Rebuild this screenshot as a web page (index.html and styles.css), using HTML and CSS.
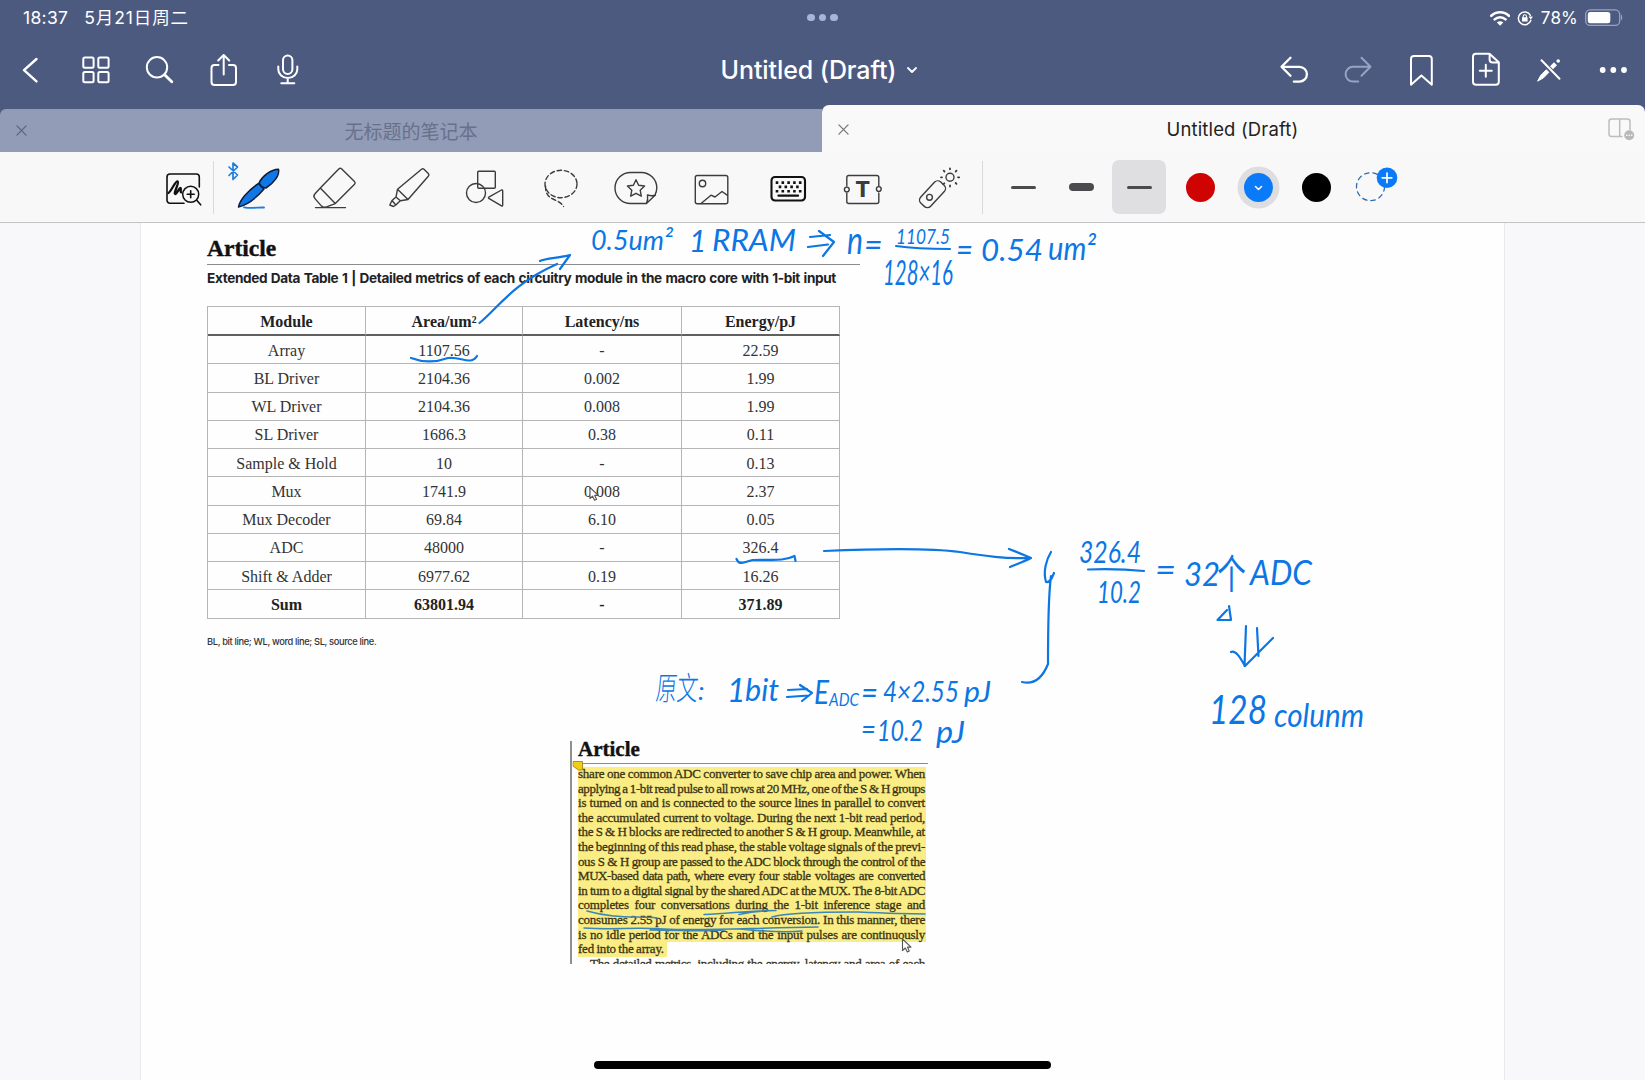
FILE: index.html
```html
<!DOCTYPE html>
<html lang="zh-CN">
<head>
<meta charset="utf-8">
<title>Untitled (Draft)</title>
<link rel="stylesheet" href="styles.css">
</head>
<body>
<div class="app">
  <header class="header">
    <div class="status">
      <div class="status-left"><span>18:37</span><span class="date">5月21日周二</span></div>
      <div class="multitask"><i></i><i></i><i></i></div>
      <div class="status-right">
        <svg width="20" height="16" viewBox="1490 9 20 16" fill="none" stroke="#fff" stroke-width="2.6"><path d="M1491.3 14.8a12.6 12.6 0 0 1 17.6 0M1494.7 18.4a7.8 7.8 0 0 1 10.8 0"/><path d="M1500.1 24.8l-3.2-3.3a4.6 4.6 0 0 1 6.4 0z" fill="#fff" stroke="none"/></svg>
        <svg class="lock" width="16" height="16" viewBox="1517 9 16 16" fill="none" stroke="#fff" stroke-width="1.5"><path d="M1530.8 19.5a6.4 6.4 0 1 1-.4-5.2"/><path d="M1528.6 15.5h4.2l-2 3.2z" fill="#fff" stroke="none"/><path d="M1522 16.3h5.6v4.2h-5.6z" fill="#fff" stroke="none"/><path d="M1523.2 16.5v-1.2a1.6 1.6 0 0 1 3.2 0v1.2" stroke-width="1.1"/></svg>
        <span class="percent">78%</span>
        <svg width="38" height="18" viewBox="1585 9 38 18" fill="none"><rect x="1585.7" y="9.8" width="34" height="15.6" rx="4.5" stroke="#9aa3bd" stroke-width="1.3"/><rect x="1587.8" y="12" width="22.5" height="11.2" rx="2.5" fill="#fff"/><path d="M1621 14.5c1.6.6 1.6 5.4 0 6z" fill="#9aa3bd"/></svg>
      </div>
    </div>
    <div class="nav">
      <div class="nav-group">
        <svg viewBox="0 38 64 64"><path d="M36.500 59L24 70.2 36.500 81.4" stroke-width="2.4"/></svg>
        <svg viewBox="64 38 64 64"><rect x="83.3" y="57.5" width="10.3" height="10.3" rx="1.5"/><rect x="98.3" y="57.5" width="10.3" height="10.3" rx="1.5"/><rect x="83.3" y="72" width="10.3" height="10.3" rx="1.5"/><rect x="98.3" y="72" width="10.3" height="10.3" rx="1.5"/></svg>
        <svg viewBox="128 38 64 64"><circle cx="157" cy="67.3" r="10.2"/><path d="M164.6 74.8l7.2 7" stroke-width="2.8"/></svg>
        <svg viewBox="192 38 64 64"><path d="M218.5 65h-4a3 3 0 0 0-3 3v14a3 3 0 0 0 3 3h18.5a3 3 0 0 0 3-3V68a3 3 0 0 0-3-3h-4M223.7 74.5V55.5M218.2 60.5l5.5-5.5 5.5 5.5"/></svg>
        <svg viewBox="256 38 64 64"><rect x="283" y="55.5" width="9.4" height="18.5" rx="4.7"/><path d="M278.3 66.5v3a9.5 8.5 0 0 0 19 0v-3M287.7 78v5M281.3 83.3h13"/></svg>
      </div>
      <div class="title"><span>Untitled (Draft)</span><svg width="12" height="10" viewBox="0 0 12 10"><path d="M2 3l4 4 4-4" stroke-width="1.8"/></svg></div>
      <div class="nav-group">
        <svg viewBox="1261 38 64 64"><path d="M1290.5 57.8l-9 9 9 9M1282.5 66.8h17a7.4 7.4 0 0 1 0 14.8h-5.7" stroke-width="2.3"/></svg>
        <svg class="dim" viewBox="1325 38 64 64"><path d="M1361.500 57.8l9 9-9 9M1369.500 66.8h-16.5a7.4 7.4 0 0 0 0 14.8h5.2"/></svg>
        <svg viewBox="1389 38 64 64"><path d="M1411 84.7V59a3 3 0 0 1 3-3h14.8a3 3 0 0 1 3 3v25.7l-10.4-9.2z"/></svg>
        <svg viewBox="1453 38 64 64"><path d="M1476 53.8h13.5l9.3 8.5v19.5a3 3 0 0 1-3 3H1476a3 3 0 0 1-3-3v-25a3 3 0 0 1 3-3zM1489.6 54v5.5a3 3 0 0 0 3 3h6"/><path d="M1485.8 64.8v12M1479.8 70.8h12"/></svg>
        <svg viewBox="1517 38 64 64"><path d="M1541.5 60.3l18 18.5"/><path d="M1537.8 80.8l3-5.500 5.500-5.500 2.600 2.500-5.400 5.500z" fill="#fff" stroke-width="1"/><path d="M1551.5 67.800l4-4" stroke-width="4.2" stroke-linecap="butt"/><circle cx="1558.2" cy="61" r="1.8" fill="#fff" stroke="none"/></svg>
        <svg viewBox="1581 38 64 64"><g fill="#fff" stroke="none"><circle cx="1602.7" cy="70" r="2.9"/><circle cx="1613.3" cy="70" r="2.9"/><circle cx="1624" cy="70" r="2.9"/></g></svg>
      </div>
    </div>
    <div class="tabs">
      <div class="tab inactive">
        <svg class="close" viewBox="0 0 12 12"><path d="M1 1l10 10M11 1L1 11"/></svg>
        <span>无标题的笔记本</span>
      </div>
      <div class="tab active">
        <svg class="close" viewBox="0 0 12 12"><path d="M1 1l10 10M11 1L1 11"/></svg>
        <span>Untitled (Draft)</span>
        <svg class="split" viewBox="1608 117 27 25"><path d="M1622 136.5h-10.5a2.5 2.5 0 0 1-2.5-2.5v-12.5a2.5 2.5 0 0 1 2.5-2.5h16a2.5 2.5 0 0 1 2.5 2.5v8M1619.7 119v17.500"/><circle cx="1629.2" cy="135.300" r="5" fill="#b9b9b9" stroke="none"/><path d="M1626.700 135.300h.1M1629.200 135.300h.1M1631.700 135.300h.1" stroke="#fff"/></svg>
      </div>
    </div>
  </header>

  <div class="toolbar">
    <div class="tool zoomtool"><svg viewBox="148 152 70 70" stroke="#111"><path d="M181 203.300h-11a3 3 0 0 1-3-3v-23.300a3 3 0 0 1 3-3h26.300a3 3 0 0 1 3 3V187M181 203.300h3" stroke-width="1.600"/><path d="M168.500 193c3.500-3 7-12.500 9.200-11.500 2 1-4.600 12-2.500 12.500 1.800.3 3.800-6.500 5.400-6 1.200.500-1 3.800.7 4.300" stroke-width="2.300"/><circle cx="190.700" cy="194.300" r="8" stroke-width="1.500"/><path d="M187.200 194.300h7M190.700 190.800v7M196.700 200.300l4 4.500" stroke-width="1.600"/></svg></div>
    <i class="divider"></i>
    <div class="tools">
      <div class="tool"><svg viewBox="222 152 70 70"><path d="M228 167l8.500 8-4.500 4.500v-16.500l4.500 4-8.500 8.500" stroke="#1c7fe0" stroke-width="1.700"/><path d="M237.500 207c1-6 8.500-16 20-23.500l5.500 5.500c-6 7-16 15.500-25.500 18z" fill="#0f78e6" stroke="#0b1c38" stroke-width="1.500"/><path d="M258.200 182.500c3-6.500 11.500-13 19.300-13.300 1.500 6-5 14.300-12.500 18.800-3.500-.2-6-1.700-6.800-5.500z" fill="#0f78e6" stroke="#0b1c38" stroke-width="1.500"/><path d="M243 207.300c8 1.300 14 0 20 .2" stroke="#1c7fe0" stroke-width="1.800"/></svg></div>
      <div class="tool"><svg viewBox="299 152 70 70"><path d="M339 168.700a2 2 0 0 1 2.500 0l13 12.800a2 2 0 0 1 0 2.800l-19.200 19.300-15-15.500zM320.300 188.100l-5.300 5.700a3.500 3.500 0 0 0 0 4.800l6.500 7.500c1.500 1.600 5 1.400 7 0l6.800-2.500M315.500 207.600h30"/></svg></div>
      <div class="tool"><svg viewBox="375 152 70 70"><path d="M422.500 169.200a2 2 0 0 1 2.500 0l4.300 4.200a2 2 0 0 1 0 2.800L409 199.500l-10.500-10.200zM398.500 189.300l-1.500 7.700 4.300 3.700 7.700-1.200M397 197l-4 3.500 3.800 4.500 4.500-4.300M393 200.500l-2.200 4.500 3.700 1.500 2.300-1.500"/></svg></div>
      <div class="tool"><svg viewBox="450 152 70 70"><rect x="477.700" y="171.300" width="17.600" height="17" rx="1"/><circle cx="476" cy="193" r="9.500"/><path d="M488.800 197.200L501.500 190q1.200-.6 1.200 1v14q0 1.500-1.200.8l-12.700-7.400q-.8-.6 0-1.200z"/></svg></div>
      <div class="tool"><svg viewBox="526 152 70 70"><g stroke-dasharray="4.500 2.800"><ellipse cx="561" cy="184" rx="16" ry="13.700"/><path d="M545.500 186c0 8 3 11 7.500 13 4 2 8 3 10.500 7.500"/></g></svg></div>
      <div class="tool"><svg viewBox="601 152 70 70"><path d="M646.500 203.500H630.500a15.500 15.500 0 0 1 0-31h11a15.500 15.500 0 0 1 15.300 15.500c0 3-.8 5-2 7.500zM646.500 203.500c1.500-3 1.500-5 1-8.500 3 1 5 1 8 .2M646.500 203.500l8.300-8"/><path d="M636 179.700l2.600 5.500 6 .8-4.400 4.200 1.100 6-5.300-2.900-5.300 2.900 1.100-6-4.400-4.200 6-.8z"/></svg></div>
      <div class="tool"><svg viewBox="677 152 70 70"><rect x="695.300" y="175.500" width="32.500" height="28.200" rx="2"/><circle cx="702.500" cy="183.500" r="3.200"/><path d="M701 203.500l10-8.300 4 1.800 7-5.500 5.500 3.800"/></svg></div>
      <div class="tool"><svg viewBox="752.500 152 70 70" stroke="#111"><rect x="771" y="177" width="33.500" height="23.500" rx="3.500" stroke-width="2.100"/><g stroke-width="2.600" stroke-linecap="butt" stroke-dasharray="2.600 3.200"><path d="M775.200 182.600h26M778.200 186.900h20M775.200 191.200h26"/></g><path d="M778 195.700h19.500" stroke-width="2.300"/></svg></div>
      <div class="tool"><svg viewBox="827.500 152 70 70"><path d="M846.300 186v-8.500a2 2 0 0 1 2-2h28a2 2 0 0 1 2 2V186M846.300 193v8.500a2 2 0 0 0 2 2h28a2 2 0 0 0 2-2V193"/><circle cx="846.300" cy="189.500" r="2.400"/><circle cx="878.300" cy="189" r="2.400"/><text class="t-letter" x="862.300" y="197" text-anchor="middle">T</text></svg></div>
      <div class="tool"><svg viewBox="904 152 70 70"><rect x="918" y="187.500" width="29" height="13.500" rx="4.500" transform="rotate(-47 932.500 194.200)"/><circle cx="929.500" cy="197.300" r="2.900"/><circle cx="950" cy="177.300" r="4"/><path d="M950 169.300v-1M950 185.500v1M942 177.300h-1M958 177.300h1.200M944.500 171.500l-.8-.8M955.700 171.500l.8-.8M955.700 183l.8.8M944.300 183.300l-.8.800" stroke-width="1.800"/></svg></div>
    </div>
    <i class="divider second"></i>
    <div class="widths">
      <div class="width"><i class="thin"></i></div>
      <div class="width"><i class="thick"></i></div>
      <div class="width selected"><i class="thin"></i></div>
    </div>
    <div class="colors">
      <div class="swatch"><i class="red"></i></div>
      <div class="swatch chosen"><i class="blue"><svg width="9" height="7" viewBox="0 0 9 7"><path d="M1.500 1.500l3 3 3-3" stroke="#fff"/></svg></i></div>
      <div class="swatch"><i class="black"></i></div>
      <div class="swatch"><svg width="58" height="70" viewBox="1345.500 152 58 70"><circle cx="1371" cy="186.700" r="14" stroke="#2f6bb0" stroke-width="1.300" stroke-dasharray="4.500 4"/><circle cx="1387.500" cy="177.800" r="10.300" fill="#0a7af8" stroke="none"/><path d="M1387.500 173v9.600M1382.700 177.800h9.600" stroke="#fff" stroke-width="1.700"/></svg></div>
    </div>
  </div>

  <main class="canvas">
    <div class="page">
      <section class="data">
        <h1 class="article">Article</h1>
        <p class="caption">Extended Data Table 1 | Detailed metrics of each circuitry module in the macro core with 1-bit input</p>
        <div class="table">
          <b>Module</b><b>Area/um²</b><b>Latency/ns</b><b>Energy/pJ</b>
          <span>Array</span><span>1107.56</span><span>-</span><span>22.59</span>
          <span>BL Driver</span><span>2104.36</span><span>0.002</span><span>1.99</span>
          <span>WL Driver</span><span>2104.36</span><span>0.008</span><span>1.99</span>
          <span>SL Driver</span><span>1686.3</span><span>0.38</span><span>0.11</span>
          <span>Sample &amp; Hold</span><span>10</span><span>-</span><span>0.13</span>
          <span>Mux</span><span>1741.9</span><span>0.008</span><span>2.37</span>
          <span>Mux Decoder</span><span>69.84</span><span>6.10</span><span>0.05</span>
          <span>ADC</span><span>48000</span><span>-</span><span>326.4</span>
          <span>Shift &amp; Adder</span><span>6977.62</span><span>0.19</span><span>16.26</span>
          <span class="sum">Sum</span><span class="sum">63801.94</span><span class="sum">-</span><span class="sum">371.89</span>
        </div>
        <p class="footnote">BL, bit line; WL, word line; SL, source line.</p>
      </section>
      <section class="excerpt">
        <h2 class="article small">Article</h2>
        <div class="lines">
          <p>share one common ADC converter to save chip area and power. When</p>
          <p class="tight">applying a 1-bit read pulse to all rows at 20 MHz, one of the S &amp; H groups</p>
          <p>is turned on and is connected to the source lines in parallel to convert</p>
          <p>the accumulated current to voltage. During the next 1-bit read period,</p>
          <p>the S &amp; H blocks are redirected to another S &amp; H group. Meanwhile, at</p>
          <p>the beginning of this read phase, the stable voltage signals of the previ-</p>
          <p class="tight">ous S &amp; H group are passed to the ADC block through the control of the</p>
          <p class="tight">MUX-based data path, where every four stable voltages are converted</p>
          <p class="tight">in turn to a digital signal by the shared ADC at the MUX. The 8-bit ADC</p>
          <p>completes four conversations during the 1-bit inference stage and</p>
          <p>consumes 2.55 pJ of energy for each conversion. In this manner, there</p>
          <p>is no idle period for the ADCs and the input pulses are continuously</p>
          <p class="short">fed into the array.</p>
          <p class="cut">The detailed metrics, including the energy, latency and area of each</p>
        </div>
      </section>
    </div>

    <svg class="ink" viewBox="0 223 1645 857">
      <g class="note">
        <text x="591" y="250" font-size="27" textLength="82" lengthAdjust="spacingAndGlyphs">0.5um²</text>
        <text x="689" y="252" font-size="30">1</text>
        <text x="712" y="251" font-size="31" textLength="84" lengthAdjust="spacingAndGlyphs">RRAM</text>
        <text x="847" y="254" font-size="38" textLength="16" lengthAdjust="spacingAndGlyphs">n</text>
        <text x="864" y="256" font-size="32">=</text>
        <text x="896" y="244" font-size="22" textLength="54" lengthAdjust="spacingAndGlyphs">1107.5</text>
        <text x="883" y="285" font-size="34" textLength="70" lengthAdjust="spacingAndGlyphs">128×16</text>
        <text x="956" y="261" font-size="32" textLength="17" lengthAdjust="spacingAndGlyphs">=</text>
        <text x="981" y="261" font-size="31" textLength="62" lengthAdjust="spacingAndGlyphs">0.54</text>
        <text x="1048" y="260" font-size="33" textLength="48" lengthAdjust="spacingAndGlyphs">um²</text>

        <text x="1079" y="563" font-size="31" textLength="62" lengthAdjust="spacingAndGlyphs">326.4</text>
        <text x="1097" y="603" font-size="31" textLength="44" lengthAdjust="spacingAndGlyphs">10.2</text>
        <text x="1155" y="582" font-size="34" textLength="21" lengthAdjust="spacingAndGlyphs">=</text>
        <text x="1184" y="586" font-size="32" textLength="36" lengthAdjust="spacingAndGlyphs">32</text>
        <text class="han mid" x="0" y="0" font-size="34" transform="translate(1217 589) scale(.85 1.200)">个</text>
        <text x="1250" y="585" font-size="34" textLength="62" lengthAdjust="spacingAndGlyphs">ADC</text>
        <text x="1209" y="724" font-size="40" textLength="58" lengthAdjust="spacingAndGlyphs">128</text>
        <text x="1274" y="727" font-size="32" textLength="90" lengthAdjust="spacingAndGlyphs">colunm</text>

        <text class="han" x="0" y="0" font-size="27" transform="translate(655 700) scale(.78 1.200) skewX(-8)">原文</text>
        <text x="698" y="700" font-size="26">:</text>
        <text x="727" y="702" font-size="32">1</text>
        <text x="745" y="701" font-size="31" textLength="34" lengthAdjust="spacingAndGlyphs">bit</text>
        <text x="814" y="704" font-size="32" textLength="15" lengthAdjust="spacingAndGlyphs">E</text>
        <text x="829" y="706" font-size="18" textLength="30" lengthAdjust="spacingAndGlyphs">ADC</text>
        <text x="861" y="704" font-size="32" textLength="17" lengthAdjust="spacingAndGlyphs">=</text>
        <text x="883" y="702" font-size="29" textLength="76" lengthAdjust="spacingAndGlyphs">4×2.55</text>
        <text x="964" y="702" font-size="28" textLength="27" lengthAdjust="spacingAndGlyphs">pJ</text>
        <text x="861" y="740" font-size="30" textLength="15" lengthAdjust="spacingAndGlyphs">=</text>
        <text x="877" y="741" font-size="29" textLength="46" lengthAdjust="spacingAndGlyphs">10.2</text>
        <text x="936" y="743" font-size="30" textLength="29" lengthAdjust="spacingAndGlyphs">pJ</text>
      </g>
      <g class="stroke">
        <path d="M479.500 323C498 308 512 284 557 264M540 261C545 258 560 258 570 255L560 269"/>
        <path d="M810 237l20-2M808 247l20-2.500M819 231l15 11-11 14"/>
        <path d="M896 246c20 3 38 3 54 3"/>
        <path d="M411 358c13 5 26 4 37 0 12-2 23 8 29-2" />
        <path d="M736.500 559c3 7 7 3 16 1 17-1 30 2 42-4l1 5"/>
        <path d="M824 551c46-2 106-3 136 1 25 4 45 7 70 6M1009 549c8 3 15 6 22 9-8 4-14 6-21 9"/>
        <path d="M1051 552c-5 8-8 20-5 30 4 1 6-4 8-9M1051 576c-3 22-3 58-3 88-6 15-14 21-26 18"/>
        <path d="M1088 569.500q30-1 56 1.500"/>
        <path d="M1229 606l2 14h-13.500l9.500-10"/>
        <path d="M1246 626l-1.500 40M1257 628l1.500 28M1231 652c5-3 11 9 14 14l13-13 15-15"/>
        <path d="M788 690l19-1M787 697l22-1.500M800 685l12 8-10 8"/>
      </g>
      <g class="underline">
        <path d="M587 911c28 8 49 5 70 7M704 914.500c28-1 42-4 72-4-10 0-28 2-37 4M772 917c17-5 58-5 83-5 24 1 47 2 70 2"/>
        <path d="M584 928c30 2 50-1 80 1 40 2 83-1 154-2M650 930c32 0 50 2 75 0M740 929c23 2 40 4 62 2"/>
      </g>
      <path d="M573.500 761.500h9v8.500h-4l-5-3.500z" fill="#f2cd16" stroke="#9a7b12" stroke-width=".8"/>
      <g fill="#fff" stroke="#555" stroke-width="1.100">
        <path d="M590 487.500v11l2.600-2.300 2 4 2-1-1.900-3.800h3.600z"/>
        <path d="M902.500 939v11.500l2.800-2.500 2 4 2-1-1.900-3.900h3.600z"/>
      </g>
    </svg>
    <div class="home"></div>
  </main>
</div>
</body>
</html>
```
FILE: styles.css
```css
* { box-sizing: border-box; }
body {
  margin: 0;
  width: 1645px;
  height: 1080px;
  overflow: hidden;
  font-family: Inter, "Noto Sans CJK SC", sans-serif;
}
h1, h2, p { margin: 0; }
i { display: block; }
svg { display: block; flex: none; fill: none; stroke-linecap: round; stroke-linejoin: round; }

.app { display: flex; flex-direction: column; height: 1080px; }

/* header */
.header { height: 152px; background: #4d5a80; color: #fff; display: flex; flex-direction: column; }
.status { height: 35px; display: grid; grid-template-columns: 1fr auto 1fr; align-items: center; font-size: 17.500px; line-height: 26px; }
.status-left { display: flex; align-items: baseline; gap: 16px; padding-left: 23px; letter-spacing: .3px; }
.date { letter-spacing: .9px; }
.multitask { display: flex; gap: 4px; }
.multitask i { width: 7.500px; height: 7.500px; border-radius: 50%; background: #a9b4dc; }
.status-right { display: flex; align-items: center; justify-content: flex-end; padding-right: 22px; }
.lock { margin-left: 7px; }
.percent { margin: 0 7px 0 8px; font-size: 17px; letter-spacing: .2px; }
.nav { height: 70px; display: grid; grid-template-columns: 1fr auto 1fr; align-items: center; }
.nav-group { display: flex; }
.nav-group:last-child { justify-content: flex-end; }
.nav svg { stroke: #fff; stroke-width: 2; }
.nav-group svg { width: 64px; height: 64px; }
.nav .dim { stroke: #98a2c2; }
.title { display: flex; align-items: center; gap: 10px; font-size: 25px; font-weight: 500; transform: translateX(-3px); letter-spacing: -.1px; }
.tabs { flex: 1; display: flex; align-items: flex-end; }
.tab { display: flex; align-items: center; justify-content: center; position: relative; font-size: 19px; }
.inactive { width: 822px; height: 43px; background: #929cb6; color: #68718c; border-radius: 6px 0 0 0; padding-bottom: 1px; }
.active { width: 823px; height: 47px; background: #f9f9f9; color: #222; border-radius: 7px 7px 0 0; font-size: 18.500px; letter-spacing: .15px; padding-top: 1px; padding-right: 2px; }
.close { position: absolute; left: 16px; width: 11px; height: 11px; stroke: #5c647c; stroke-width: 1.400; }
.active .close { stroke: #777; }
.split { position: absolute; right: 10px; width: 27px; height: 25px; stroke: #bdbdbd; stroke-width: 1.500; }

/* toolbar */
.toolbar { height: 71px; background: #f9f8f9; border-bottom: 1px solid #c3c3c8; display: flex; align-items: center; padding-left: 148px; }
.tool { display: flex; justify-content: center; }
.tool svg { width: 70px; height: 70px; stroke-width: 1.400; }
.tools .tool svg:not([stroke]) { stroke: #3c3c3e; }
.zoomtool { width: 65px; justify-content: flex-start; }
.divider { width: 1px; height: 53px; background: #d9d9dc; flex: none; }
.tools { display: flex; width: 757px; margin-left: 6px; }
.tools .tool { width: 75.700px; }
.t-letter { font: 800 22px Inter, sans-serif; fill: #3c3c3e; stroke: none; }
.second { margin-left: 5px; }
.widths { display: flex; gap: 4px; margin-left: 13px; }
.width { width: 54px; height: 54px; border-radius: 7px; display: flex; align-items: center; justify-content: center; }
.selected { background: #dfdfe1; }
.thin { width: 25px; height: 3px; border-radius: 2px; background: #4b4b4d; }
.thick { width: 25px; height: 8px; border-radius: 4px; background: #4b4b4d; }
.colors { display: flex; margin-left: 5px; }
.swatch { width: 58px; height: 70px; display: flex; align-items: center; justify-content: center; }
.swatch i { width: 29px; height: 29px; border-radius: 50%; display: flex; align-items: center; justify-content: center; }
.chosen i { box-shadow: 0 0 0 6.500px #dedee0; }
.red { background: #d00303; }
.blue { background: #0a7af8; }
.blue svg { stroke-width: 1.600; margin-top: 3px; }
.black { background: #000; }

/* canvas */
.canvas { height: 857px; background: #f8f8fa; position: relative; display: flex; justify-content: center; }
.page { width: 1365px; height: 857px; background: #fefefe; border: solid #e9e9ec; border-width: 0 1px; padding: 12px 0 0 66px; }
.article { font: 700 23.500px/26px "Liberation Serif", serif; color: #111; -webkit-text-stroke: .4px #111; }
.data { width: 653px; height: 506px; }
.data .article { height: 30px; border-bottom: 1.500px solid #8c8c8c; }
.caption { width: 629px; height: 41px; font: 700 13.600px/27px Inter, sans-serif; letter-spacing: -.35px; white-space: nowrap; color: #222; text-align: justify; text-align-last: justify; }
.table { width: 633px; display: grid; grid-template-columns: 158px 157px 159px 158px; grid-template-rows: 29px repeat(10, 28.250px); border: solid #b5b5b5; border-width: 1px 0 0 1px; font: 16px "Liberation Serif", serif; color: #333; }
.table > * { display: flex; align-items: center; justify-content: center; border: solid #b5b5b5; border-width: 0 1px 1px 0; padding-top: 2px; }
.table b { border-bottom: 2px solid #606060; color: #222; }
.table .sum { font-weight: 700; color: #222; }
.footnote { font: 500 9.300px/14px Inter, sans-serif; letter-spacing: -.35px; margin-top: 16px; color: #333; white-space: nowrap; }
.excerpt { width: 358px; height: 223px; margin-left: 363px; border-left: 2px solid #8f8f8f; padding-left: 6px; overflow: hidden; }
.small { height: 23px; font-size: 21px; line-height: 16px; border-bottom: 1.500px solid #8c8c7c; }
.lines { width: 348px; padding-top: 3px; font: 13px/14.620px "Liberation Serif", serif; letter-spacing: -.22px; word-spacing: -1.200px; color: #3a3413; -webkit-text-stroke: .3px #3a3413; }
.lines p { height: 14.620px; background: #fbed86; text-align: justify; text-align-last: justify; white-space: nowrap; padding-right: 1px; }
.lines .tight { letter-spacing: -.42px; word-spacing: -1.500px; }
.lines .short { width: 89px; text-align-last: left; word-spacing: -.500px; }
.lines .cut { background: none; padding-left: 12px; color: #333; letter-spacing: -.3px; }

/* handwriting layer */
.ink { position: absolute; left: 0; top: 0; width: 1645px; height: 857px; }
.note { fill: #0b76e4; font-family: Lato, sans-serif; font-style: italic; font-weight: 400; }
.han { font-family: "Noto Sans CJK SC", sans-serif; font-style: normal; font-weight: 300; }
.mid { font-weight: 400; }
.stroke { stroke: #0b76e4; stroke-width: 2.200; }
.underline { stroke: #3c86b4; stroke-width: 1.500; }
.home { position: absolute; left: 594px; top: 838px; width: 457px; height: 8px; border-radius: 4px; background: #000; }
```
